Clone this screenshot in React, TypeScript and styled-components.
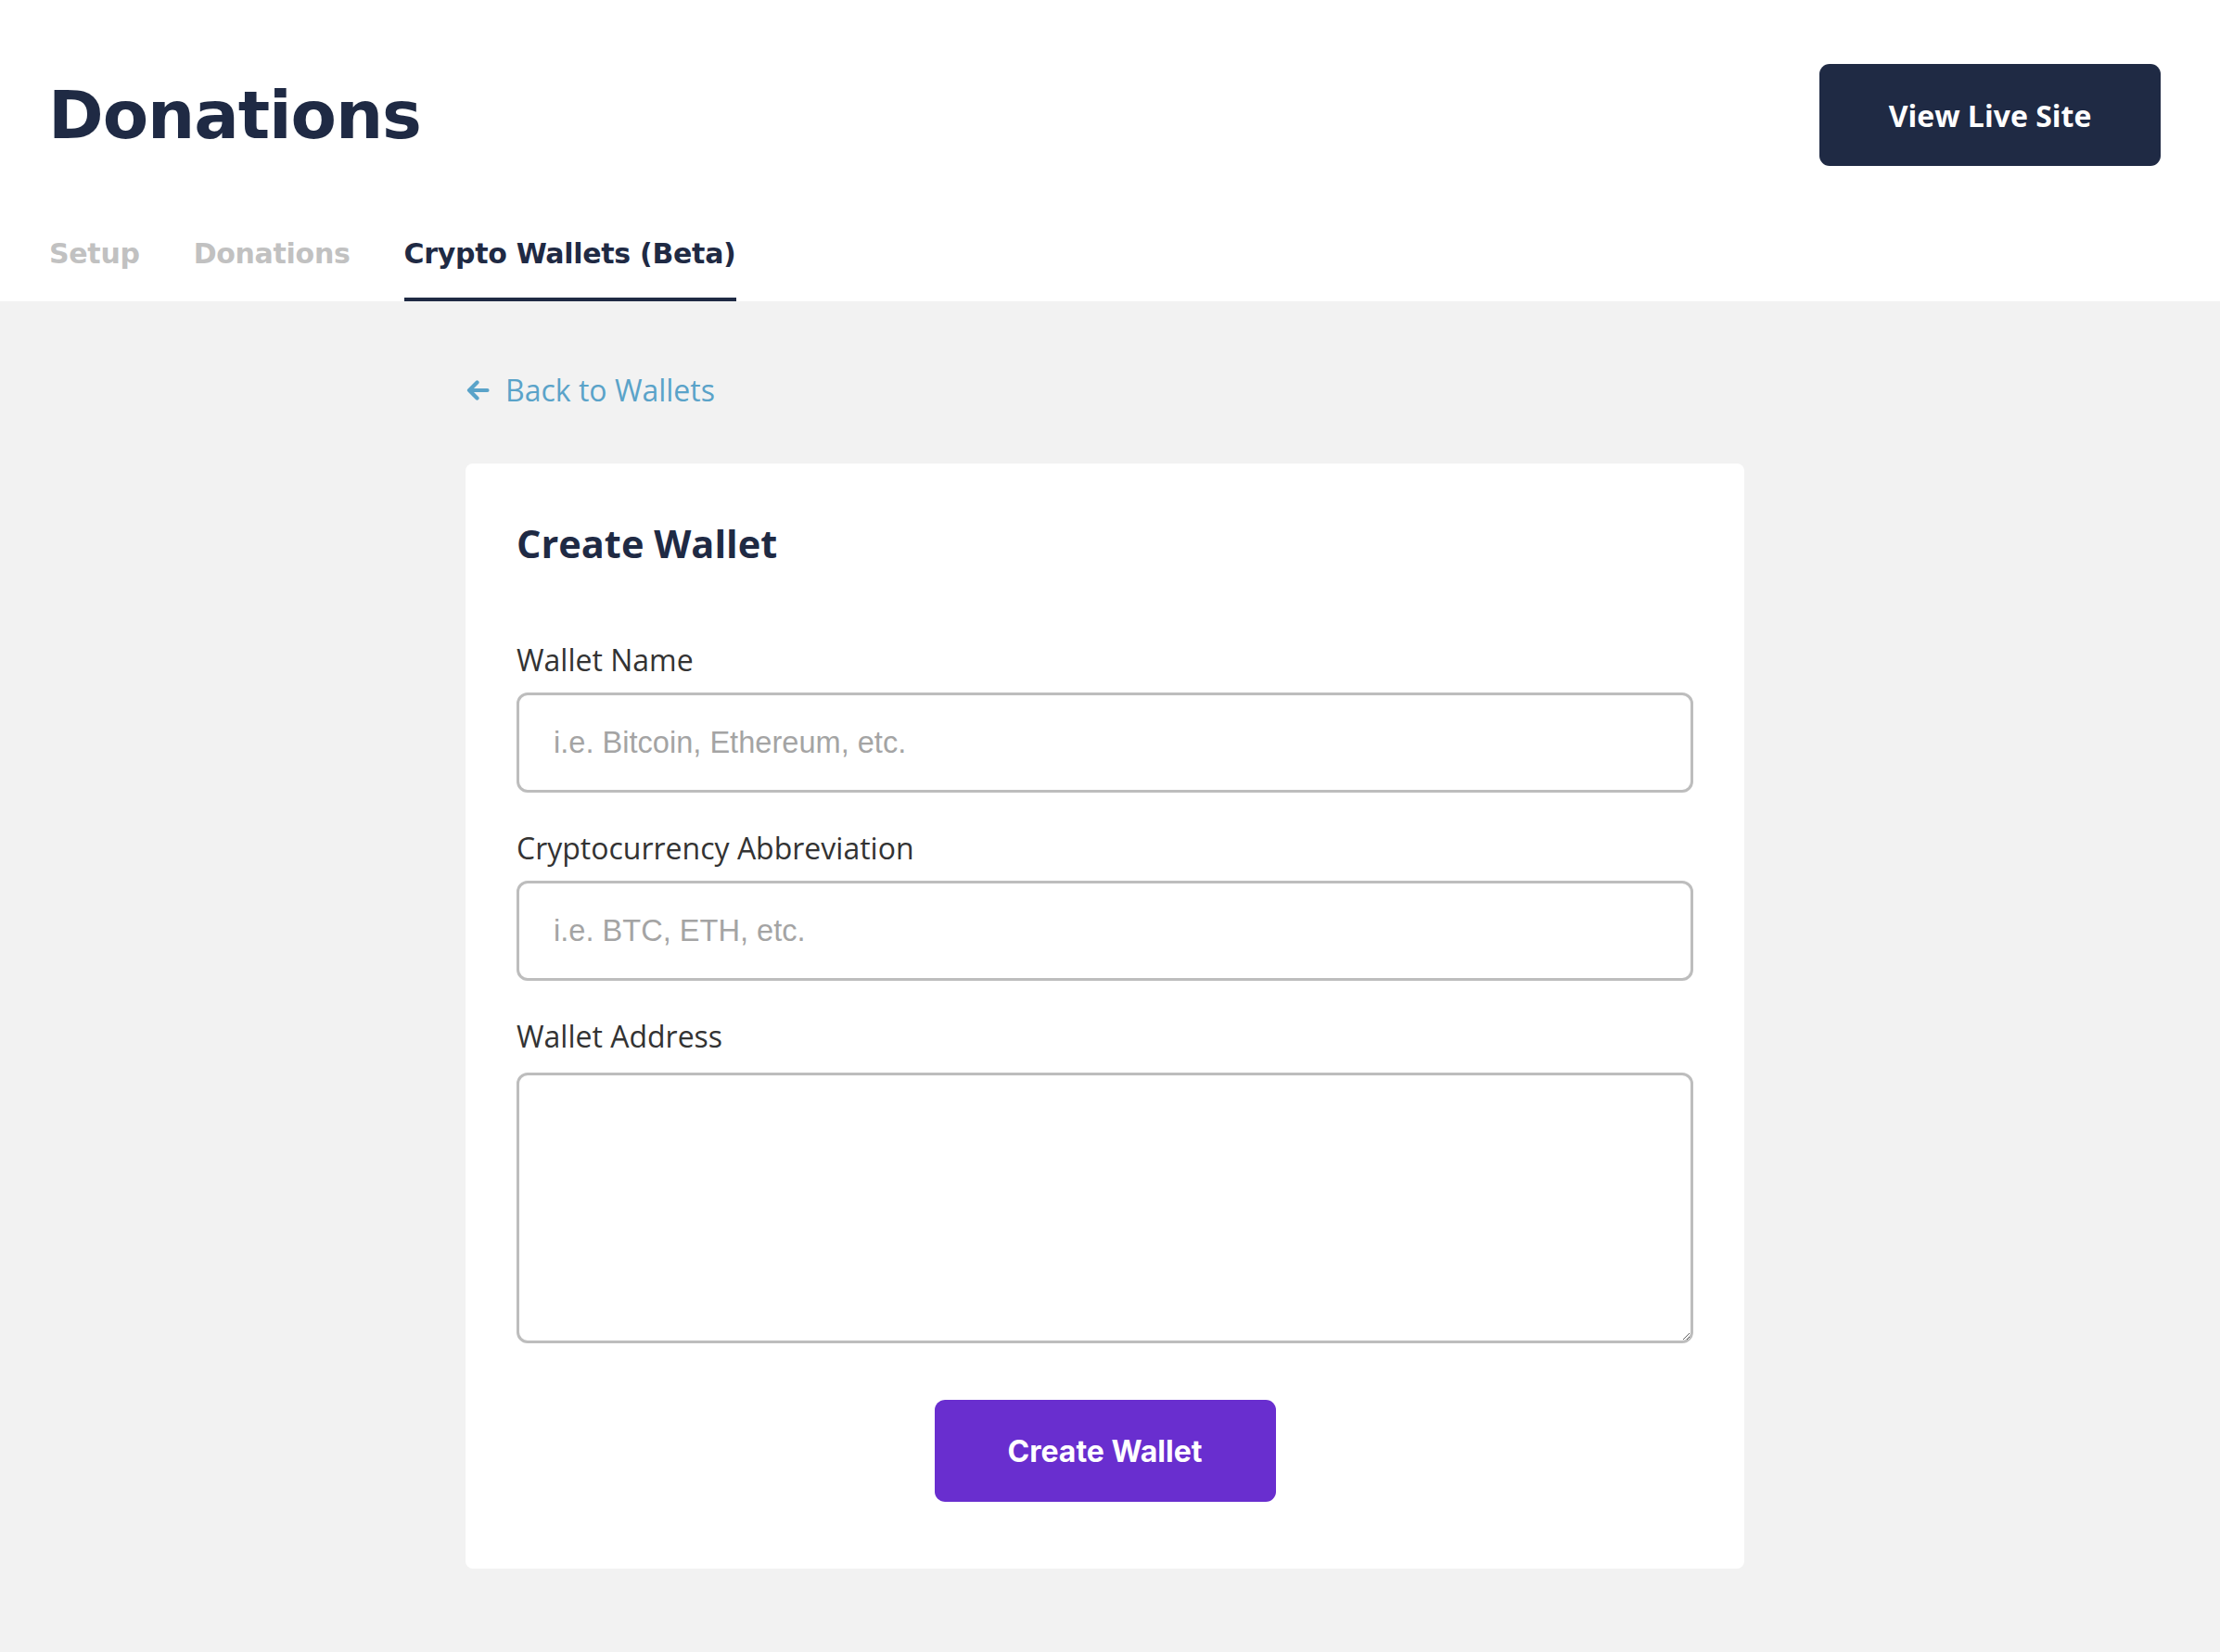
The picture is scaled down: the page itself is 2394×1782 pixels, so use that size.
import React from 'react';
import styled, { createGlobalStyle } from 'styled-components';

const GlobalStyle = createGlobalStyle`
    * {
        box-sizing: border-box;
    }
    html, body {
        margin: 0;
        padding: 0;
    }
    body {
        background-color: #f2f2f2;
        font-family: "Open Sans", "Noto Sans", sans-serif;
        color: #333333;
    }
`;

const Header = styled.header`
    background-color: #ffffff;
    padding: 69px 64px 0 53px;
`;

const TitleRow = styled.div`
    display: flex;
    align-items: center;
    justify-content: space-between;
    height: 110px;
`;

const PageTitle = styled.h1`
    margin: 0 0 0 -1px;
    font-family: "DejaVu Sans", sans-serif;
    font-weight: 700;
    font-size: 72px;
    line-height: 110px;
    letter-spacing: -1.1px;
    color: #1f2a44;
`;

const Tabs = styled.nav`
    display: flex;
    gap: 58px;
    margin-top: 77px;
`;

const Tab = styled.a<{ $active?: boolean }>`
    display: block;
    font-family: "DejaVu Sans", sans-serif;
    font-weight: 700;
    font-size: 30px;
    line-height: 35px;
    letter-spacing: -0.3px;
    color: ${p => (p.$active ? '#1f2a44' : '#c1c1c1')};
    padding-bottom: 30px;
    border-bottom: 4px solid ${p => (p.$active ? '#1f2a44' : 'transparent')};
    cursor: pointer;
`;

const Button = styled.button<{ $variant: 'dark' | 'purple' }>`
    width: 368px;
    height: 110px;
    border: none;
    border-radius: 11px;
    color: #ffffff;
    cursor: pointer;
    font-size: 32px;
    font-weight: 700;
    background-color: ${p => (p.$variant === 'dark' ? '#1f2a44' : '#692ecf')};
    font-family: ${p =>
        p.$variant === 'dark' ? '"Open Sans", sans-serif' : 'Inter, "Noto Sans", sans-serif'};
`;

const Main = styled.main`
    padding: 74px 11px 90px 0;
`;

const Content = styled.div`
    width: 1379px;
    margin: 0 auto;
`;

const BackLink = styled.a`
    display: inline-flex;
    align-items: center;
    gap: 17px;
    font-size: 32px;
    line-height: 44px;
    color: #5aa3c9;
    text-decoration: none;
    cursor: pointer;
`;

const Card = styled.section`
    margin-top: 57px;
    background-color: #ffffff;
    border-radius: 8px;
    padding: 58px 55px 72px;
`;

const CardTitle = styled.h2`
    margin: 0;
    font-size: 41.5px;
    line-height: 56px;
    font-weight: 700;
    color: #1f2a44;
`;

const Form = styled.form`
    display: flex;
    flex-direction: column;
    margin-top: 76px;
`;

const Field = styled.div`
    display: flex;
    flex-direction: column;

    & + & {
        margin-top: 38px;
    }
`;

const Label = styled.label`
    font-size: 32px;
    line-height: 44px;
    color: #333333;
    margin-bottom: 13px;
`;

const fieldBase = `
    width: 100%;
    border: 3px solid #bdbdbd;
    border-radius: 12px;
    background-color: #ffffff;
    font-family: "Liberation Sans", Arial, sans-serif;
    font-size: 32.6px;
    color: #333333;
    outline: none;

    &::placeholder {
        color: #a4a4a4;
    }
`;

const Input = styled.input`
    ${fieldBase}
    height: 108px;
    padding: 0 37px;
`;

const TextArea = styled.textarea`
    ${fieldBase}
    display: block;
    height: 292px;
    margin-top: 4px;
    padding: 24px 37px;
`;

const Actions = styled.div`
    display: flex;
    justify-content: center;
    margin-top: 61px;
`;

const ArrowLeft = () => (
    <svg width="26" height="24" viewBox="0 0 26 24" fill="none">
        <path
            d="M23.5 12H4 M12.5 3.5L4 12L12.5 20.5"
            stroke="#5aa3c9"
            strokeWidth="4.2"
            strokeLinecap="round"
            strokeLinejoin="round"
        />
    </svg>
);

const App: React.FC = () => {
    return (
        <>
            <GlobalStyle />
            <Header>
                <TitleRow>
                    <PageTitle>Donations</PageTitle>
                    <Button $variant="dark" type="button">View Live Site</Button>
                </TitleRow>
                <Tabs>
                    <Tab>Setup</Tab>
                    <Tab>Donations</Tab>
                    <Tab $active>Crypto Wallets (Beta)</Tab>
                </Tabs>
            </Header>
            <Main>
                <Content>
                    <BackLink>
                        <ArrowLeft />
                        Back to Wallets
                    </BackLink>
                    <Card>
                        <CardTitle>Create Wallet</CardTitle>
                        <Form onSubmit={e => e.preventDefault()}>
                            <Field>
                                <Label htmlFor="wallet-name">Wallet Name</Label>
                                <Input id="wallet-name" placeholder="i.e. Bitcoin, Ethereum, etc." />
                            </Field>
                            <Field>
                                <Label htmlFor="wallet-abbr">Cryptocurrency Abbreviation</Label>
                                <Input id="wallet-abbr" placeholder="i.e. BTC, ETH, etc." />
                            </Field>
                            <Field>
                                <Label htmlFor="wallet-address">Wallet Address</Label>
                                <TextArea id="wallet-address" />
                            </Field>
                            <Actions>
                                <Button $variant="purple" type="submit">Create Wallet</Button>
                            </Actions>
                        </Form>
                    </Card>
                </Content>
            </Main>
        </>
    );
};

export default App;
